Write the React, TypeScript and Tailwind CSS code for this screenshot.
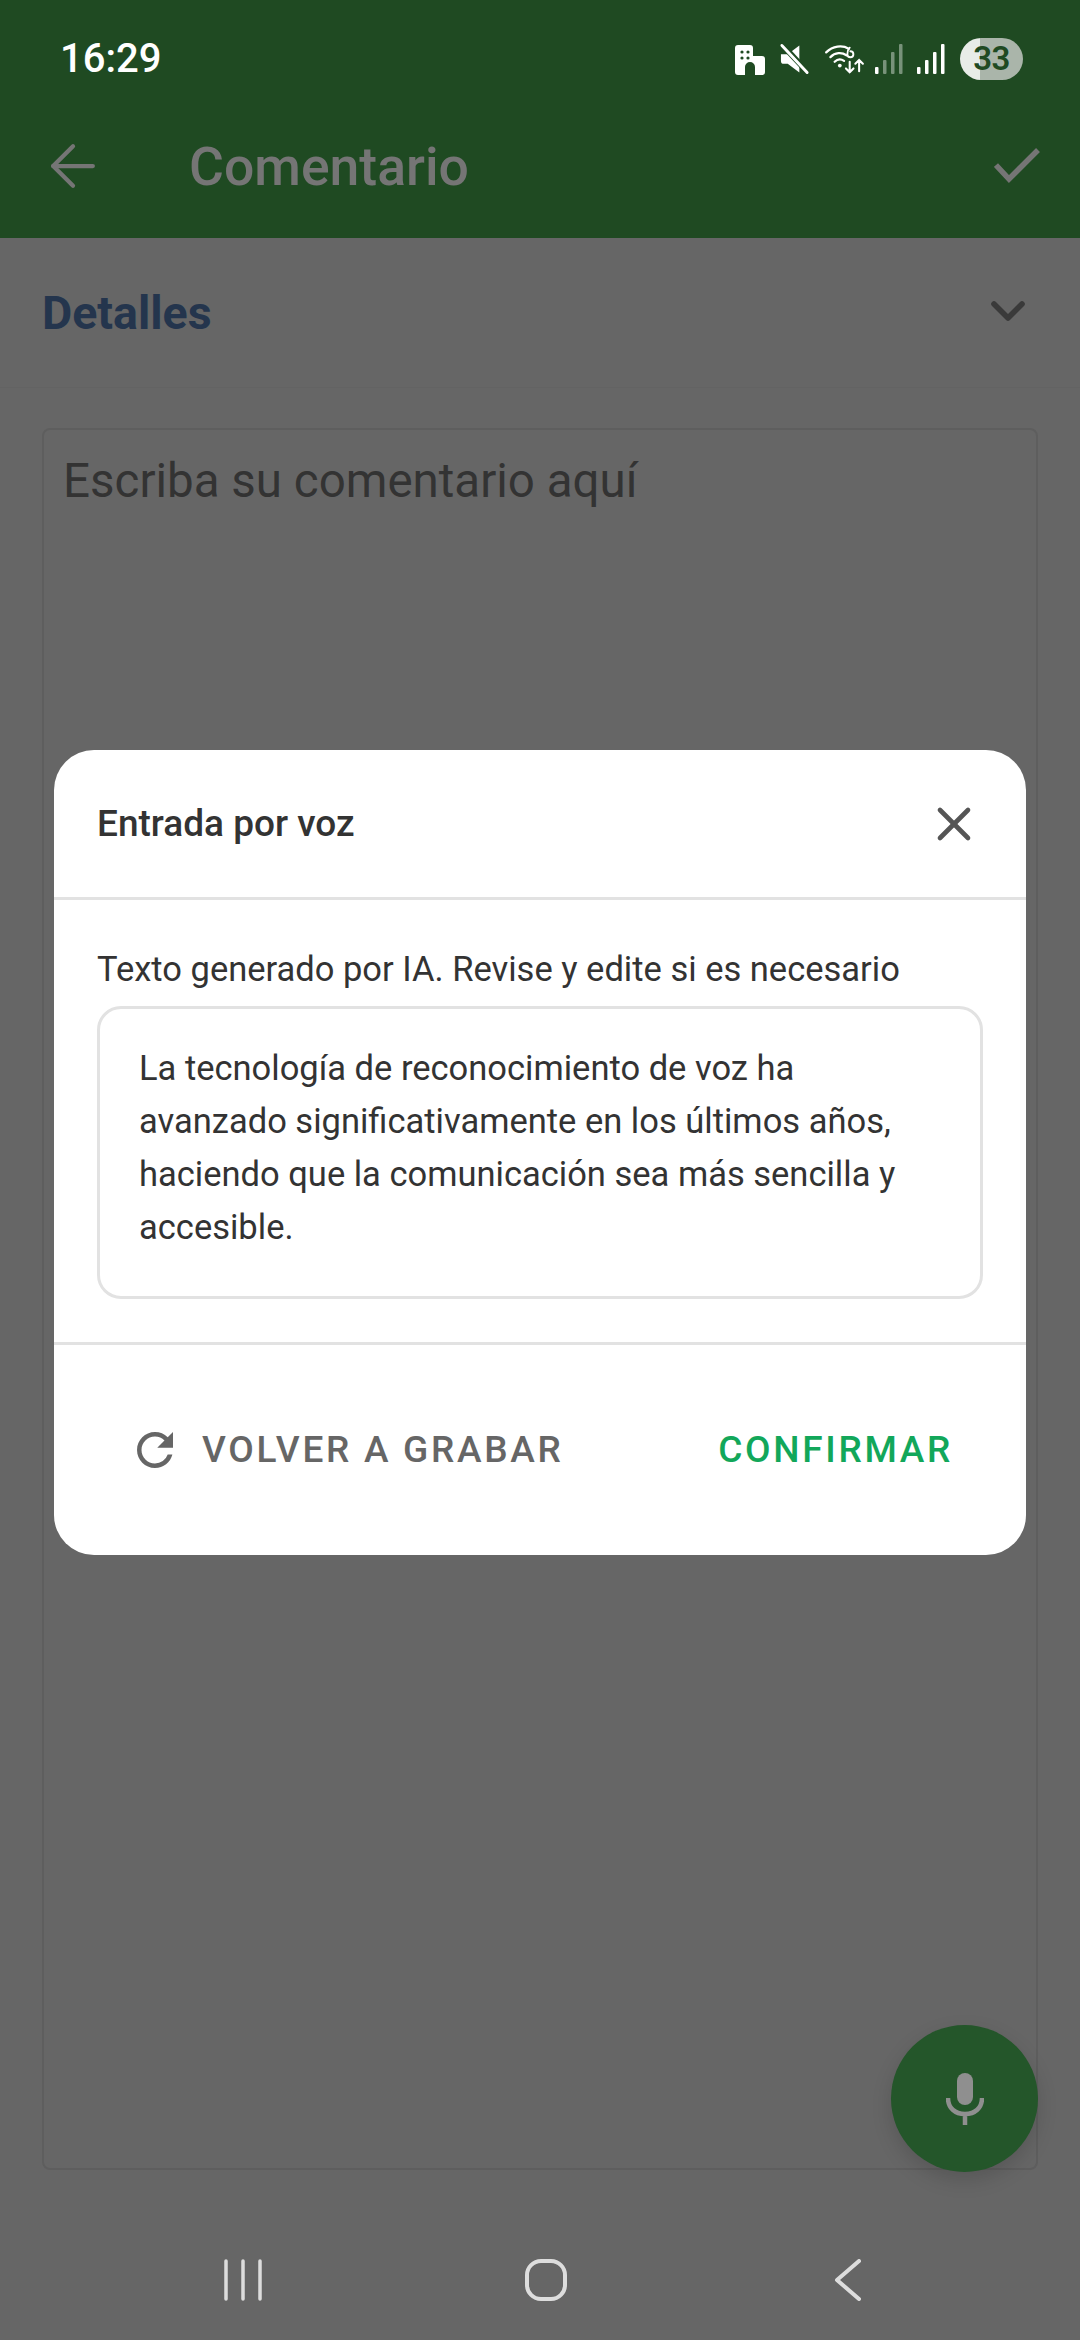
import { ArrowLeft, ChevronDown, X } from 'lucide-react';

function StatusIcons() {
  return (
    <div className="flex items-center">
      {/* work profile building */}
      <svg width="30" height="31" viewBox="0 0 30 31" className="fill-white">
        <path d="M3 1h12a3 3 0 0 1 3 3v8h9a3 3 0 0 1 3 3v13a3 3 0 0 1-3 3h-7v-8a5 5 0 0 0-10 0v8H3a3 3 0 0 1-3-3V4a3 3 0 0 1 3-3z" />
        <g className="fill-[#1f4a22]">
          <circle cx="7" cy="8" r="1.6" />
          <circle cx="13" cy="8" r="1.6" />
          <circle cx="7" cy="14" r="1.6" />
          <circle cx="13" cy="14" r="1.6" />
        </g>
      </svg>
      {/* muted */}
      <svg width="31" height="32" viewBox="0 0 32 32" className="ml-[14px]">
        <path d="M2 11h7l12-9v28L9 21H5a3 3 0 0 1-3-3z" fill="#fff" />
        <path d="M2 0l28 30" stroke="#1f4a22" strokeWidth="6" />
        <path d="M3 2l26 28" stroke="#fff" strokeWidth="3" strokeLinecap="round" />
      </svg>
      {/* wifi 6 */}
      <svg width="42" height="32" viewBox="0 0 42 34" fill="none" className="ml-[14px]">
        <path d="M1 10c7-7 17-8 24-4M5.5 15c5-5 12-5.500 17-2M10 20c3-3 7-3 10-1" stroke="#fff" strokeWidth="2.400" strokeLinecap="round" />
        <circle cx="15.500" cy="24" r="2" fill="#fff" />
        <path d="M26 5c-2.500 2.500-2.500 5-2.500 7a3.200 3.200 0 1 0 3.200-3.200" stroke="#fff" strokeWidth="2" strokeLinecap="round" />
        <path d="M26 20v11m-4-4l4 4 4-4M36 30V18m-4 4l4-4 4 4" stroke="#fff" strokeWidth="2.200" strokeLinecap="round" />
      </svg>
      {/* sim 2 signal, weak */}
      <svg width="28" height="30" viewBox="0 0 28 30" className="ml-[9px]">
        <rect x="0" y="23" width="3.500" height="7" rx="1" fill="#fff" />
        <rect x="8" y="16" width="3.500" height="14" rx="1" fill="#fff" fillOpacity="0.4" />
        <rect x="16" y="8" width="3.500" height="22" rx="1" fill="#fff" fillOpacity="0.4" />
        <rect x="24" y="0" width="3.500" height="30" rx="1" fill="#fff" fillOpacity="0.4" />
      </svg>
      {/* sim 1 signal */}
      <svg width="28" height="30" viewBox="0 0 28 30" className="ml-[14px] fill-white">
        <rect x="0" y="23" width="3.500" height="7" rx="1" />
        <rect x="8" y="16" width="3.500" height="14" rx="1" />
        <rect x="16" y="8" width="3.500" height="22" rx="1" />
        <rect x="24" y="0" width="3.500" height="30" rx="1" />
      </svg>
      {/* battery */}
      <div className="ml-[15px] flex h-[42px] w-[63px] items-center justify-center rounded-full bg-[linear-gradient(90deg,#e8ece8_32%,#aab5aa_32%)] text-[33px] font-semibold tracking-[-0.5px] text-[#1f4a22]">
        33
      </div>
    </div>
  );
}

export default function App() {
  return (
    <div className="relative flex h-[2340px] w-[1080px] flex-col overflow-hidden bg-[#666666] font-['Roboto',sans-serif]">
      <header className="h-[238px] bg-[#1f4a22]">
        <div className="flex h-[116px] items-center justify-between pl-[60px] pr-[57px] pt-[2px]">
          <span className="text-[40px] font-medium leading-none text-white">16:29</span>
          <StatusIcons />
        </div>
        <div className="flex h-[100px] items-center pl-[39px] pr-[40px]">
          <ArrowLeft size={68} strokeWidth={1.500} className="text-[#757575]" />
          <h1 className="ml-[82px] pt-[3px] text-[53.500px] font-medium text-[#757575]">Comentario</h1>
          <svg width="46" height="38" viewBox="0 0 46 38" fill="none" stroke="#757575" strokeWidth="5.500" className="ml-auto">
            <path d="M2 18l13 14L44 3" />
          </svg>
        </div>
      </header>

      <section className="flex h-[150px] items-center justify-between border-b border-[#636363] pl-[42px] pr-[44px]">
        <h2 className="pt-[3px] text-[46.500px] font-bold text-[#24354d]">Detalles</h2>
        <ChevronDown size={56} strokeWidth={2.400} className="-translate-y-[2px] text-[#3a3a3a]" />
      </section>

      <main className="relative flex-1 px-[42px] pt-[40px]">
        <div className="h-[1742px] rounded-[8px] border-2 border-[#5e5e5e] px-[19px] py-[18px]">
          <p className="text-[47.500px] leading-[66px] text-[#333333]">Escriba su comentario aquí</p>
        </div>
        <button className="absolute left-[891px] top-[1637px] flex h-[147px] w-[147px] items-center justify-center rounded-full bg-[#24562a] shadow-[0_8px_20px_rgba(0,0,0,0.15)]">
          <svg width="38" height="52" viewBox="0 0 38 52" fill="none">
            <rect x="11" y="0" width="16" height="32" rx="8" fill="#8f8f8f" />
            <path d="M2 25c0 10 7 16 17 16s17-6 17-16M19 41v11" stroke="#8f8f8f" strokeWidth="4.500" />
          </svg>
        </button>
      </main>

      <nav className="flex h-[170px] items-center justify-between pl-[224px] pr-[219px] pt-[50px]">
        <svg width="38" height="42" viewBox="0 0 38 42" fill="none" stroke="#dddddd" strokeWidth="3.500" strokeLinecap="round">
          <path d="M2 2v38M19 2v38M36 2v38" />
        </svg>
        <svg width="42" height="42" viewBox="0 0 42 42" fill="none" stroke="#dddddd" strokeWidth="4" className="-translate-x-[2px]">
          <rect x="2" y="2" width="38" height="38" rx="14" />
        </svg>
        <svg width="27" height="42" viewBox="0 0 27 42" fill="none" stroke="#dddddd" strokeWidth="4" strokeLinecap="round" strokeLinejoin="round">
          <path d="M25 2L3 21l22 19" />
        </svg>
      </nav>

      {/* voice input dialog */}
      <div className="absolute left-[54px] top-[750px] w-[972px] rounded-[40px] bg-white">
        <div className="flex h-[150px] items-center justify-between border-b-[3px] border-[#e2e2e2] pl-[43px] pr-[44px]">
          <h3 className="text-[37px] font-medium text-[#333333]">Entrada por voz</h3>
          <X size={56} strokeWidth={2} className="text-[#555555]" />
        </div>
        <div className="border-b-[3px] border-[#e2e2e2] px-[43px] pb-[43px] pt-[47px]">
          <p className="text-[34.500px] leading-[44px] text-[#333333]">Texto generado por IA. Revise y edite si es necesario</p>
          <div className="mt-[15px] h-[293px] rounded-[24px] border-[3px] border-[#e2e2e2] py-[33px] pl-[39px] pr-[50px] text-[34.500px] leading-[53px] text-[#333333]">
            La tecnología de reconocimiento de voz ha avanzado significativamente en los últimos años, haciendo que la comunicación sea más sencilla y accesible.
          </div>
        </div>
        <div className="flex h-[210px] items-center justify-between pl-[74px] pr-[73px]">
          <button className="flex items-center text-[37px] font-medium tracking-[2.700px] text-[#666666]">
            <svg width="54" height="54" viewBox="0 0 24 24" fill="#666666" className="mr-[20px]">
              <path d="M17.65 6.35A7.958 7.958 0 0 0 12 4c-4.420 0-7.990 3.580-7.990 8s3.570 8 7.990 8c3.730 0 6.840-2.550 7.730-6h-2.080A5.990 5.990 0 0 1 12 18c-3.310 0-6-2.690-6-6s2.690-6 6-6c1.660 0 3.140.69 4.220 1.780L13 11h7V4l-2.350 2.350z" />
            </svg>
            VOLVER A GRABAR
          </button>
          <button className="text-[37px] font-medium tracking-[2.700px] text-[#12a75a]">CONFIRMAR</button>
        </div>
      </div>
    </div>
  );
}
